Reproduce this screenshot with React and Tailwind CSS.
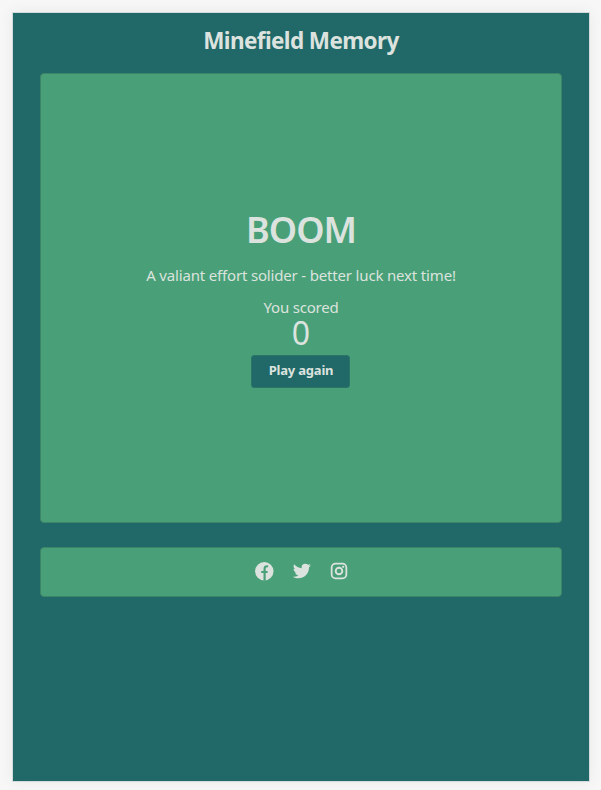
import { BiLogoTwitter } from "react-icons/bi";

function FacebookIcon() {
  return (
    <svg width="22" height="22" viewBox="0 0 22 22" fill="none" aria-label="Facebook">
      <circle cx="11.3" cy="11.2" r="9.2" fill="currentColor" />
      <path d="M11.6 20.8V8.9c0-2 1.1-2.9 3.5-2.6M8.2 12h6.4" stroke="#49a078" strokeWidth="2.2" />
    </svg>
  );
}

function InstagramIcon() {
  return (
    <svg width="22" height="22" viewBox="0 0 22 22" fill="none" stroke="currentColor" aria-label="Instagram">
      <rect x="3.65" y="3.65" width="14.7" height="14.7" rx="3.9" strokeWidth="1.8" />
      <circle cx="11" cy="11" r="3.3" strokeWidth="1.9" />
      <circle cx="15.2" cy="6.8" r="1.1" fill="currentColor" stroke="none" />
    </svg>
  );
}

export default function App() {
  return (
    <div className="h-[790px] w-[601px] overflow-hidden bg-[#f6f7f6] p-3 font-['Noto_Sans',sans-serif] text-[#dce3de]">
      <main className="flex h-[770px] w-[578px] flex-col items-center border border-[#d5dadb] bg-[#216869] shadow-[0_0_14px_rgba(31,36,33,0.06)]">
        <h1 className="flex h-[60px] items-center whitespace-nowrap pb-[4px] text-[22.5px] font-bold tracking-[-0.6px]">Minefield Memory</h1>
        <section className="flex h-[450px] w-[522px] shrink-0 flex-col items-center rounded-[4px] border border-[#3d8568] bg-[#49a078] pt-[131px]">
          <h2 className="h-[50px] whitespace-nowrap text-[36px] leading-[50px] font-semibold tracking-[-1px]">BOOM</h2>
          <p className="mt-2 h-6 whitespace-nowrap text-[15px] leading-6 tracking-[-0.17px]">A valiant effort solider - better luck next time!</p>
          <p className="mt-2 h-[22px] whitespace-nowrap text-[15px] leading-6 tracking-[-0.2px]">You scored</p>
          <p className="h-[38px] text-[32px] leading-[32px]">0</p>
          <button className="mr-px h-[33px] w-[99px] shrink-0 rounded-[3px] border border-[#2c7566] bg-[#216869] pb-px pl-px text-[13px] font-bold tracking-[-0.2px] whitespace-nowrap">Play again</button>
        </section>
        <footer className="mt-6 flex h-[50px] w-[522px] shrink-0 items-center justify-center gap-[15.5px] rounded-[4px] border border-[#3d8568] bg-[#49a078] pb-0.5 pl-px">
          <FacebookIcon />
          <BiLogoTwitter size={22} />
          <InstagramIcon />
        </footer>
      </main>
    </div>
  );
}
